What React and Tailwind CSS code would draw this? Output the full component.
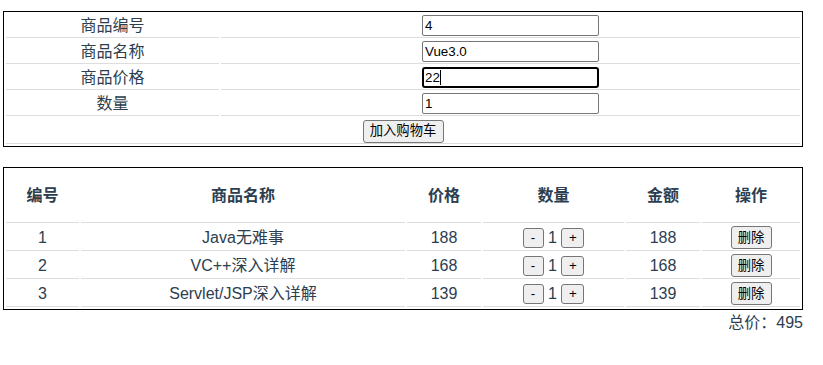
import React from "react";

const FONT = { fontFamily: '"Liberation Sans", Arial, "Noto Sans CJK SC", sans-serif' };

const FORM_ROWS = [
  { label: "商品编号", value: "4" },
  { label: "商品名称", value: "Vue3.0" },
  { label: "商品价格", value: "22", focused: true },
  { label: "数量", value: "1" },
];

const BOOKS = [
  { id: 1, name: "Java无难事", price: 188, count: 1 },
  { id: 2, name: "VC++深入详解", price: 168, count: 1 },
  { id: 3, name: "Servlet/JSP深入详解", price: 139, count: 1 },
];

const btn =
  "inline-flex items-center justify-center align-middle bg-[#efefef] border border-[#767676] rounded-[3px] text-[13.33px] text-black leading-none";

function Field({ value, focused }) {
  if (focused) {
    return (
      <div className="inline-flex items-center w-[177px] h-[21px] border-2 border-black rounded-[3px] px-[1px] text-[13.33px] text-black text-left align-middle">
        <span>{value}</span>
        <span className="inline-block w-px h-[15px] bg-black" />
      </div>
    );
  }
  return (
    <input
      readOnly
      value={value}
      className="w-[177px] h-[21px] border border-[#767676] rounded-[2px] px-[2px] text-[13.33px] text-black align-middle outline-none"
      style={FONT}
    />
  );
}

export default function App() {
  const total = BOOKS.reduce((s, b) => s + b.price * b.count, 0);

  return (
    <div className="pl-[3px] pt-[11px] text-[#2c3e50] text-[16px]" style={FONT}>
      {/* add-to-cart form */}
      <table className="w-[800px] table-fixed border-separate border-spacing-[2px] border border-black">
        <colgroup>
          <col className="w-[213px]" />
          <col className="w-[579px]" />
        </colgroup>
        <tbody>
          {FORM_ROWS.map((row) => (
            <tr key={row.label}>
              <td className="h-[24px] p-0 text-center leading-[23px] border-b border-[#ddd]">{row.label}</td>
              <td className="h-[24px] p-0 text-center leading-none border-b border-[#ddd]">
                <Field value={row.value} focused={row.focused} />
              </td>
            </tr>
          ))}
          <tr>
            <td colSpan={2} className="h-[26px] p-0 text-center border-b border-[#ddd]">
              <button className={`${btn} w-[81px] h-[23px]`}>加入购物车</button>
            </td>
          </tr>
        </tbody>
      </table>

      {/* cart */}
      <table className="mt-[20px] w-[800px] table-fixed border-separate border-spacing-[2px] border border-black">
        <thead>
          <tr>
            {[
              ["编号", "w-[73px]"],
              ["商品名称", "w-[324px]"],
              ["价格", "w-[74px]"],
              ["数量", "w-[141px]"],
              ["金额", "w-[74px]"],
              ["操作", "w-[98px]"],
            ].map(([t, w]) => (
              <th key={t} className={`${w} h-[53px] p-0 font-bold text-center border-b border-[#ddd]`}>
                {t}
              </th>
            ))}
          </tr>
        </thead>
        <tbody>
          {BOOKS.map((b) => (
            <tr key={b.id}>
              <td className="h-[26px] p-0 text-center leading-[22px] border-b border-[#ddd]">{b.id}</td>
              <td className="h-[26px] p-0 text-center leading-[22px] border-b border-[#ddd]">{b.name}</td>
              <td className="h-[26px] p-0 text-center leading-[22px] border-b border-[#ddd]">{b.price}</td>
              <td className="h-[26px] p-0 text-center leading-[22px] border-b border-[#ddd]">
                <button className={`${btn} w-[21px] h-[20px]`}>-</button>{" "}
                <span className="align-middle">{b.count}</span>{" "}
                <button className={`${btn} w-[23px] h-[20px]`}>+</button>
              </td>
              <td className="h-[26px] p-0 text-center leading-[22px] border-b border-[#ddd]">{b.price * b.count}</td>
              <td className="h-[26px] p-0 text-center leading-none border-b border-[#ddd]">
                <button className={`${btn} w-[41px] h-[23px]`}>删除</button>
              </td>
            </tr>
          ))}
        </tbody>
      </table>
      <div className="w-[800px] text-right leading-[22px] mt-[2px]">总价：{total}</div>
    </div>
  );
}
